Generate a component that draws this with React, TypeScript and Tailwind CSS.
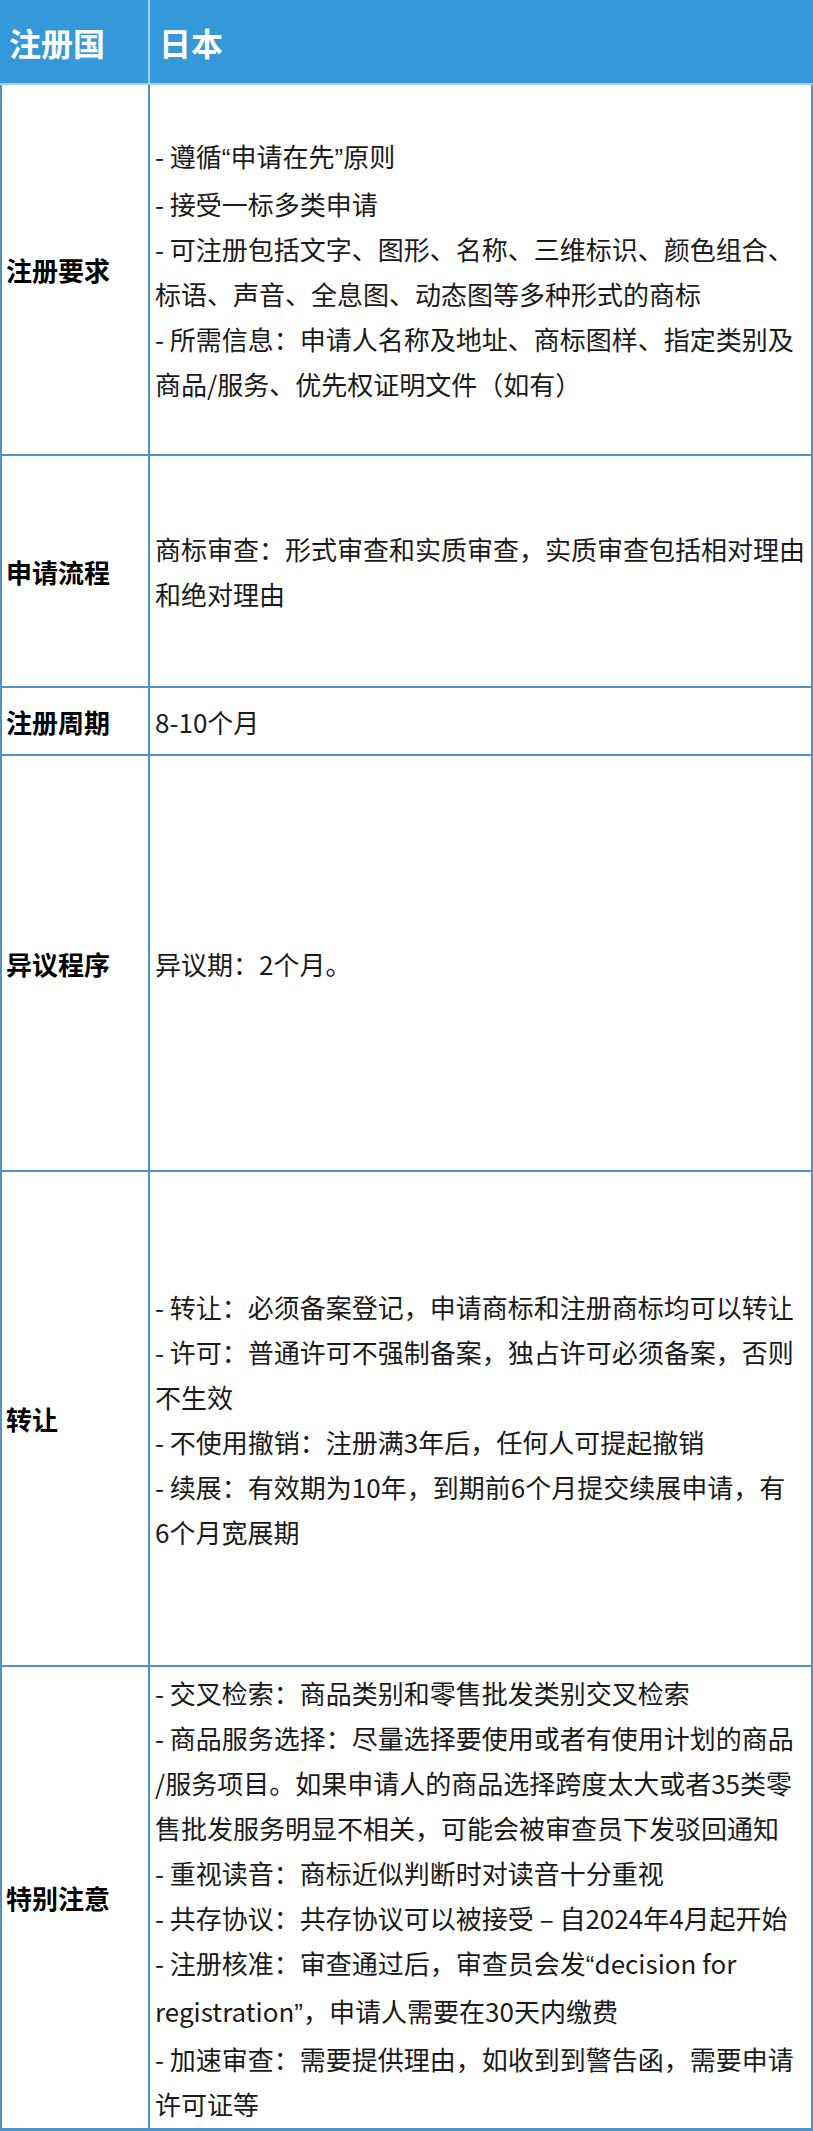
import type { ReactNode } from "react"

// narrow latin quotes, as in the reference
const Q = ({ children }: { children: ReactNode }) => (
  <span className="font-['Liberation_Sans',sans-serif]">{children}</span>
)

const rows: { label: string; height: string; lines: ReactNode[] }[] = [
  {
    label: "注册要求",
    height: "h-[371px]",
    lines: [
      <>
        - 遵循<Q>“</Q>申请在先<Q>”</Q>原则
      </>,
      "- 接受一标多类申请",
      "- 可注册包括文字、图形、名称、三维标识、颜色组合、",
      "标语、声音、全息图、动态图等多种形式的商标",
      "- 所需信息：申请人名称及地址、商标图样、指定类别及",
      "商品/服务、优先权证明文件（如有）",
    ],
  },
  {
    label: "申请流程",
    height: "h-[232px]",
    lines: ["商标审查：形式审查和实质审查，实质审查包括相对理由", "和绝对理由"],
  },
  {
    label: "注册周期",
    height: "h-[68px]",
    lines: ["8-10个月"],
  },
  {
    label: "异议程序",
    height: "h-[416px]",
    lines: ["异议期：2个月。"],
  },
  {
    label: "转让",
    height: "h-[495px]",
    lines: [
      "- 转让：必须备案登记，申请商标和注册商标均可以转让",
      "- 许可：普通许可不强制备案，独占许可必须备案，否则",
      "不生效",
      "- 不使用撤销：注册满3年后，任何人可提起撤销",
      "- 续展：有效期为10年，到期前6个月提交续展申请，有",
      "6个月宽展期",
    ],
  },
  {
    label: "特别注意",
    height: "h-[464px]",
    lines: [
      "- 交叉检索：商品类别和零售批发类别交叉检索",
      "- 商品服务选择：尽量选择要使用或者有使用计划的商品",
      "/服务项目。如果申请人的商品选择跨度太大或者35类零",
      "售批发服务明显不相关，可能会被审查员下发驳回通知",
      "- 重视读音：商标近似判断时对读音十分重视",
      "- 共存协议：共存协议可以被接受 – 自2024年4月起开始",
      <>
        - 注册核准：审查通过后，审查员会发<Q>“</Q>decision for
      </>,
      <>
        registration<Q>”</Q>，申请人需要在30天内缴费
      </>,
      "- 加速审查：需要提供理由，如收到到警告函，需要申请",
      "许可证等",
    ],
  },
]

export default function App() {
  return (
    <div className="w-[813px] bg-white font-['Microsoft_YaHei','Noto_Sans_CJK_SC',sans-serif] text-[#1a1a1a]">
      {/* header */}
      <div className="grid h-[85px] grid-cols-[150px_1fr] border-b-2 border-[#9fd0ef] bg-[#3498d9] text-[32px] font-bold text-white">
        <div className="flex items-center border-r-2 border-[#9fd0ef] pl-[9px]">注册国</div>
        <div className="flex items-center pl-[9px]">日本</div>
      </div>

      <div className="border-x-2 border-[#4f93c6]">
        {rows.map((row) => (
          <div
            key={row.label}
            className={`grid grid-cols-[148px_1fr] border-b-2 border-[#4f93c6] last:border-b-[3px] ${row.height}`}
          >
            <div className="flex items-center border-r-2 border-[#4f93c6] pl-[4px] text-[26px] font-bold text-black">
              {row.label}
            </div>
            <div className="flex flex-col justify-center pl-[5px] text-[26px] leading-[45px]">
              {row.lines.map((line, i) => (
                <div key={i} className="whitespace-nowrap">
                  {line}
                </div>
              ))}
            </div>
          </div>
        ))}
      </div>
    </div>
  )
}
